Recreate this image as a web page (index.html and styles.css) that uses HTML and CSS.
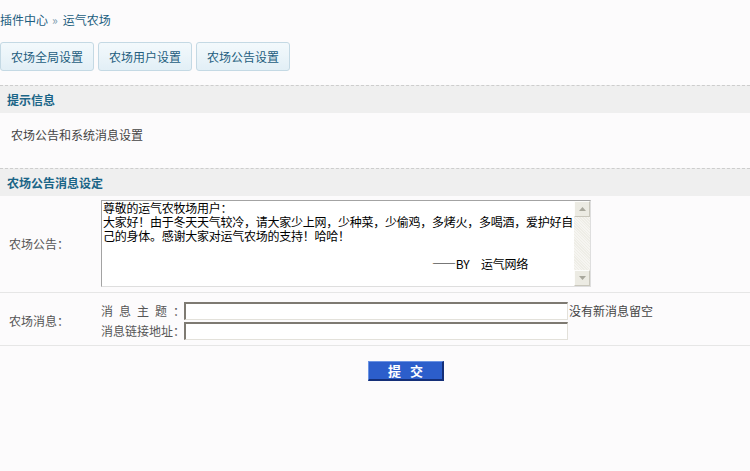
FILE: index.html
```html
<!DOCTYPE html>
<html lang="zh-CN">
<head>
<meta charset="utf-8">
<title>运气农场</title>
<link rel="stylesheet" href="styles.css">
</head>
<body>
<div class="crumb"><a class="crumb-link">插件中心</a><span class="sep">»</span><a class="crumb-link">运气农场</a></div>
<div class="tabs">
  <button class="tab" type="button">农场全局设置</button>
  <button class="tab" type="button">农场用户设置</button>
  <button class="tab" type="button">农场公告设置</button>
</div>
<div class="sec-head">提示信息</div>
<div class="tip">农场公告和系统消息设置</div>
<div class="sec-head">农场公告消息设定</div>
<form class="form">
  <div class="row row-notice">
    <div class="lbl">农场公告：</div>
    <div class="ta-wrap">
      <textarea class="ta">尊敬的运气农牧场用户：
大家好！由于冬天天气较冷，请大家少上网，少种菜，少偷鸡，多烤火，多喝酒，爱护好自
己的身体。感谢大家对运气农场的支持！哈哈！

　　　　　　　　　　　　　　　　　　　　　　　　　　　　——BY　运气网络</textarea>
      <div class="sb">
        <div class="sb-btn"><svg width="7" height="4" viewBox="0 0 7 4"><path d="M0 4L3.5 0L7 4Z" fill="#a9a89d"/></svg></div>
        <div class="sb-track"></div>
        <div class="sb-btn"><svg width="7" height="4" viewBox="0 0 7 4"><path d="M0 0L3.5 4L7 0Z" fill="#a9a89d"/></svg></div>
      </div>
    </div>
  </div>
  <div class="row row-msg">
    <div class="lbl">农场消息：</div>
    <div class="msg-grid">
      <div class="msg-line"><span class="sub-lbl"><span class="spread">消息主题</span>：</span><input class="txt" type="text"><span class="hint">没有新消息留空</span></div>
      <div class="msg-line"><span class="sub-lbl">消息链接地址：</span><input class="txt" type="text"></div>
    </div>
  </div>
  <div class="submit-row"><button class="submit" type="button">提 交</button></div>
</form>
</body>
</html>
```
FILE: styles.css
```css
body {
  margin: 0;
  background: #fcfbfc;
  font-family: "Noto Sans CJK SC", sans-serif;
  font-size: 12px;
  line-height: 14px;
  color: #333;
}
.crumb {
  padding-top: 13px;
  height: 14px;
  color: #1d5e80;
}
.crumb-link { color: #1d5e80; }
.crumb .sep {
  color: #7d9cae;
  margin: 0 5px 0 4px;
}
.tabs {
  display: flex;
  gap: 4px;
  margin-top: 15px;
}
.tab {
  height: 29px;
  padding: 0 10px;
  border: 1px solid #c4d9e4;
  border-radius: 3px;
  background: linear-gradient(#f3f9fc, #e2eff6);
  color: #245e7e;
  font-family: inherit;
  font-size: 12px;
}
.sec-head {
  border-top: 1px dashed #cdcdcd;
  background: #efefef;
  height: 27px;
  line-height: 27px;
  padding-left: 7px;
  font-weight: bold;
  color: #1b6587;
}
.tabs + .sec-head { margin-top: 14px; }
.tip {
  box-sizing: border-box;
  height: 55px;
  padding: 15px 11px 0;
  color: #444;
}
.row {
  display: flex;
  align-items: center;
  border-bottom: 1px solid #e6e6e6;
}
.lbl {
  width: 101px;
  box-sizing: border-box;
  padding-left: 9px;
  color: #555;
}
.row-notice { padding: 4px 0 5px; }
.ta-wrap {
  display: flex;
  width: 490px;
  height: 87px;
  box-sizing: border-box;
  border: 1px solid;
  border-color: #a3a3a3 #dedede #dedede #a3a3a3;
  background: #fff;
}
.ta {
  flex: 1;
  border: none;
  margin: 0;
  padding: 0 0 0 1px;
  font-family: "Noto Sans CJK SC", sans-serif;
  font-size: 12px;
  line-height: 14px;
  letter-spacing: -0.25px;
  color: #000;
  background: #fff;
  resize: none;
  overflow: hidden;
  white-space: pre;
  outline: none;
}
.sb {
  width: 16px;
  display: flex;
  flex-direction: column;
  background: #f4f3ee;
}
.sb-btn {
  height: 16px;
  box-sizing: border-box;
  border: 1px solid;
  border-color: #fdfdfb #c9c7bc #c9c7bc #fdfdfb;
  background: #ecebe3;
  display: flex;
  align-items: center;
  justify-content: center;
}
.sb-track {
  flex: 1;
  background: repeating-linear-gradient(45deg, #f6f5f1 0 1px, #eeede6 1px 2px);
}
.row-msg { padding: 9px 0 5px; }
.msg-grid {
  display: flex;
  flex-direction: column;
  gap: 2px;
}
.msg-line {
  display: flex;
  align-items: center;
}
.sub-lbl {
  width: 83px;
  color: #555;
  white-space: nowrap;
}
.spread { letter-spacing: 6px; }
.txt {
  width: 384px;
  height: 18px;
  box-sizing: border-box;
  margin: 0;
  padding: 0;
  border-style: solid;
  border-width: 2px 1px 1px 2px;
  border-color: #7e7a72 #e3e1da #e3e1da #7e7a72;
  background: #fff;
}
.hint {
  margin-left: 1px;
  color: #444;
}
.submit-row {
  padding: 15px 0 0 368px;
}
.submit {
  width: 76px;
  height: 20px;
  padding: 0;
  background: #2c5ecb;
  border-style: solid;
  border-width: 1px 2px 2px 1px;
  border-color: #6b93e3 #142f78 #142f78 #6b93e3;
  color: #fff;
  font-family: "Noto Sans CJK SC", sans-serif;
  font-weight: bold;
  font-size: 13px;
  line-height: 16px;
  word-spacing: 6px;
}
```
